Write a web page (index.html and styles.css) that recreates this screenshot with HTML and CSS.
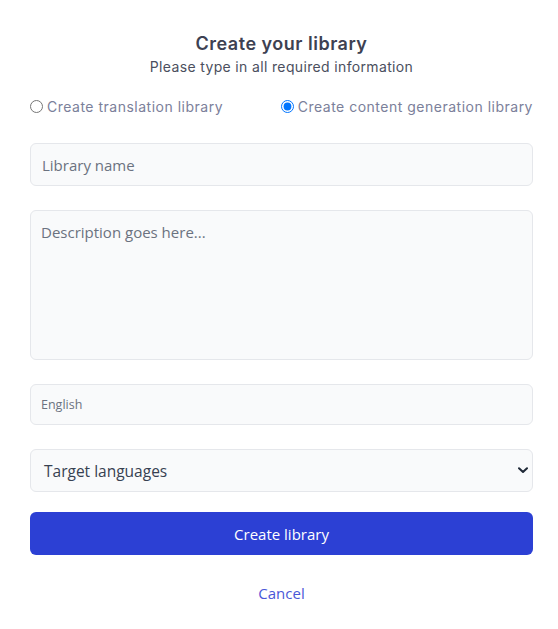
FILE: index.html
```html
<!DOCTYPE html>
<html>
<head>
<meta charset="utf-8">
<link rel="stylesheet" href="styles.css">
</head>
<body>
<div class="page">
  <div class="header">
    <h1 class="title">Create your library</h1>
    <p class="subtitle">Please type in all required information</p>
  </div>
  <div class="radios">
    <label class="radio"><input type="radio" name="kind"> Create translation library</label>
    <label class="radio"><input type="radio" name="kind" checked> Create content generation library</label>
  </div>
  <input class="field name" type="text" placeholder="Library name">
  <textarea class="field desc" placeholder="Description goes here..."></textarea>
  <input class="field lang" type="text" placeholder="English">
  <div class="select">
    <span>Target languages</span>
    <svg class="chev" width="10" height="7" viewBox="0 0 10 7"><path d="M1 1.2 L5 5 L9 1.2" fill="none" stroke="#1f2937" stroke-width="2" stroke-linecap="round" stroke-linejoin="round"/></svg>
  </div>
  <button class="submit">Create library</button>
  <div class="cancel">Cancel</div>
</div>
</body>
</html>
```
FILE: styles.css
```css
html, body { margin: 0; padding: 0; background: #fff; }
body { font-family: "Open Sans", "Noto Sans", sans-serif; }
.page {
  width: 503px;
  margin-left: 30px;
  padding-top: 33px;
  display: flex;
  flex-direction: column;
}
.header { text-align: center; }
.title {
  margin: 0;
  font-family: "Inter", sans-serif;
  font-size: 18px;
  font-weight: 600;
  letter-spacing: 0.5px;
  color: #3d4152;
  line-height: 22px;
}
.subtitle {
  margin: 2px 0 0;
  font-family: "Inter", sans-serif;
  font-size: 14px;
  letter-spacing: 0.35px;
  color: #4b4f5e;
  line-height: 20px;
}
.radios {
  display: flex;
  justify-content: space-between;
  margin-top: 19px;
  height: 20px;
  align-items: center;
}
.radio {
  font-family: "Inter", sans-serif;
  font-size: 14px;
  letter-spacing: 0.5px;
  color: #7b809a;
  display: flex;
  align-items: center;
  gap: 4px;
}
.radio input { margin: 0; width: 13px; height: 13px; }
.field {
  box-sizing: border-box;
  width: 503px;
  background: #f9fafb;
  border: 1px solid #e5e7eb;
  border-radius: 6px;
  font-family: "Open Sans", sans-serif;
  color: #374151;
  outline: none;
  display: block;
}
.field::placeholder { color: #6b7280; }
.name { margin-top: 27px; height: 43px; padding: 0 11px; font-size: 15px; }
.desc { margin-top: 24px; height: 150px; padding: 11px 10px; font-size: 15px; resize: none; }
.lang { margin-top: 24px; height: 41px; padding: 0 10px; font-size: 12.5px; }
.select {
  box-sizing: border-box;
  margin-top: 24px;
  height: 43px;
  background: #f9fafb;
  border: 1px solid #e5e7eb;
  border-radius: 6px;
  display: flex;
  align-items: center;
  justify-content: space-between;
  padding: 0 4px 0 13px;
  font-size: 15.5px;
  color: #374151;
}
.submit {
  margin-top: 20px;
  height: 43px;
  width: 503px;
  border: 0;
  border-radius: 6px;
  background: #2c40d4;
  color: #fff;
  font-family: "Open Sans", sans-serif;
  font-size: 15px;
  font-weight: 500;
}
.cancel {
  margin-top: 28px;
  text-align: center;
  font-size: 15px;
  color: #4a57d8;
}
```
